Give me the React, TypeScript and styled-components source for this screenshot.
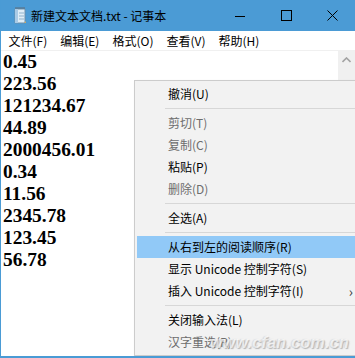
import * as React from "react"
import styled, { createGlobalStyle } from "styled-components"

const GlobalStyle = createGlobalStyle`
  html, body {
    margin: 0;
    padding: 0;
    background: #ffffff;
    overflow: hidden;
  }
`

const ui = `"Noto Sans CJK SC", "Noto Sans", sans-serif`

const numbers = [
  "0.45",
  "223.56",
  "121234.67",
  "44.89",
  "2000456.01",
  "0.34",
  "11.56",
  "2345.78",
  "123.45",
  "56.78",
]

type Entry =
  | { sep: true }
  | { label: string; disabled?: boolean; active?: boolean; sub?: boolean }

const menuEntries: Entry[] = [
  { label: "撤消(U)" },
  { sep: true },
  { label: "剪切(T)", disabled: true },
  { label: "复制(C)", disabled: true },
  { label: "粘贴(P)" },
  { label: "删除(D)", disabled: true },
  { sep: true },
  { label: "全选(A)" },
  { sep: true },
  { label: "从右到左的阅读顺序(R)", active: true },
  { label: "显示 Unicode 控制字符(S)" },
  { label: "插入 Unicode 控制字符(I)", sub: true },
  { sep: true },
  { label: "关闭输入法(L)" },
  { label: "汉字重选(R)", disabled: true },
]

const App = () => {
  return (
    <>
      <GlobalStyle />
      <Window>
        <TitleBar>
          <AppIcon />
          <Title>新建文本文档.txt - 记事本</Title>
          <Controls>
            <CtrlButton>
              <svg width="10" height="10" viewBox="0 0 10 10">
                <line x1="0" y1="5.5" x2="10" y2="5.5" stroke="#000" strokeWidth="1" />
              </svg>
            </CtrlButton>
            <CtrlButton>
              <svg width="11" height="11" viewBox="0 0 11 11">
                <rect x="0.5" y="0.5" width="10" height="10" fill="none" stroke="#000" strokeWidth="1" />
              </svg>
            </CtrlButton>
            <CtrlButton>
              <svg width="11" height="11" viewBox="0 0 11 11">
                <path d="M0.5 0.5 L10.5 10.5 M10.5 0.5 L0.5 10.5" stroke="#000" strokeWidth="1" />
              </svg>
            </CtrlButton>
          </Controls>
        </TitleBar>

        <MenuBar>
          <MenuItem>文件(F)</MenuItem>
          <MenuItem>编辑(E)</MenuItem>
          <MenuItem>格式(O)</MenuItem>
          <MenuItem>查看(V)</MenuItem>
          <MenuItem>帮助(H)</MenuItem>
        </MenuBar>

        <Body>
          <Editor>
            {numbers.map((n) => (
              <Line key={n}>{n}</Line>
            ))}
          </Editor>
          <ScrollBar>
            <ScrollArrow>
              <svg width="9" height="6" viewBox="0 0 9 6">
                <path d="M0.5 5 L4.5 1 L8.5 5" fill="none" stroke="#a3a3a3" strokeWidth="1.6" />
              </svg>
            </ScrollArrow>
          </ScrollBar>

          <ContextMenu>
            {menuEntries.map((e, i) =>
              "sep" in e ? (
                <Separator key={i} />
              ) : (
                <CtxItem key={i} $disabled={e.disabled} $active={e.active}>
                  {e.label}
                  {e.sub && <SubArrow>›</SubArrow>}
                </CtxItem>
              )
            )}
          </ContextMenu>

          <Watermark>www.cfan.com.cn</Watermark>
        </Body>
      </Window>
    </>
  )
}
export default App

const AppIcon = () => (
  <IconBox>
    <svg width="16" height="17" viewBox="0 0 16 17">
      <path d="M3 2 L13 2 L13 16 L3 16 Z" fill="#dfeef8" stroke="#6a8fab" strokeWidth="1" />
      <path d="M3 2 L6 2 L6 16 L3 16 Z" fill="#a9cbe6" />
      <line x1="7" y1="6" x2="12" y2="6" stroke="#8fb2cc" />
      <line x1="7" y1="9" x2="12" y2="9" stroke="#8fb2cc" />
      <line x1="7" y1="12" x2="12" y2="12" stroke="#8fb2cc" />
      <path d="M3.5 1 L12.5 1" stroke="#5d6b78" strokeWidth="2" strokeDasharray="1 1" />
      <path d="M12 16 L14 14 L14 16 Z" fill="#c9a96a" />
    </svg>
  </IconBox>
)

const Window = styled.div`
  width: 355px;
  height: 358px;
  box-sizing: border-box;
  border-left: 1px solid #4a9bd5;
  border-bottom: 2px solid #4a9bd5;
  display: flex;
  flex-direction: column;
  overflow: hidden;
  font-family: ${ui};
`

const TitleBar = styled.div`
  height: 31px;
  flex-shrink: 0;
  background: #4b9bd5;
  display: flex;
  align-items: center;
`

const IconBox = styled.div`
  width: 16px;
  height: 17px;
  margin-left: 11px;
  display: flex;
`

const Title = styled.div`
  margin-left: 3px;
  font-size: 12px;
  color: #000;
  flex: 1;
  white-space: nowrap;
`

const Controls = styled.div`
  display: flex;
  height: 100%;
`

const CtrlButton = styled.div`
  width: 46px;
  height: 100%;
  display: flex;
  align-items: center;
  justify-content: center;
`

const MenuBar = styled.div`
  height: 19px;
  flex-shrink: 0;
  background: #ffffff;
  border-bottom: 1px solid #f0f0f0;
  display: flex;
  align-items: center;
  padding-left: 1px;
`

const MenuItem = styled.div`
  padding: 0 6.5px;
  font-size: 12px;
  line-height: 19px;
  color: #000;
  white-space: nowrap;
`

const Body = styled.div`
  flex: 1;
  display: flex;
  position: relative;
  background: #ffffff;
`

const Editor = styled.div`
  flex: 1;
  padding: 0 0 0 2px;
  font-family: "Liberation Serif", "Times New Roman", serif;
  font-weight: bold;
  font-size: 19.4px;
  color: #000;
`

const Line = styled.div`
  height: 22px;
  line-height: 22px;
`

const ScrollBar = styled.div`
  width: 17px;
  background: #f0f0f0;
  flex-shrink: 0;
`

const ScrollArrow = styled.div`
  height: 17px;
  display: flex;
  align-items: center;
  justify-content: center;
`

const ContextMenu = styled.div`
  position: absolute;
  left: 133px;
  top: 29px;
  width: 226px;
  box-sizing: border-box;
  padding: 2px;
  background: #f2f2f2;
  border: 1px solid #cccccc;
  box-shadow: 2px 2px 3px rgba(0, 0, 0, 0.2);
`

const CtxItem = styled.div<{ $disabled?: boolean; $active?: boolean }>`
  position: relative;
  height: 22px;
  line-height: 22px;
  padding-left: 31px;
  font-size: 12px;
  white-space: nowrap;
  color: ${(p) => (p.$disabled ? "#6d6d6d" : "#000")};
  background: ${(p) => (p.$active ? "#91c9f7" : "transparent")};
`

const SubArrow = styled.span`
  position: absolute;
  right: 4px;
  top: 0;
  font-size: 14px;
  color: #333;
`

const Separator = styled.div`
  height: 7px;
  margin-left: 28px;
  display: flex;
  align-items: center;
  &::after {
    content: "";
    flex: 1;
    height: 1px;
    background: #d7d7d7;
  }
`

const Watermark = styled.div`
  position: absolute;
  right: 6px;
  bottom: 4px;
  font-family: "Liberation Sans", Arial, sans-serif;
  font-style: italic;
  font-weight: bold;
  font-size: 16px;
  letter-spacing: 0.3px;
  color: rgba(255, 255, 255, 0.7);
  text-shadow: 1px 1px 1px rgba(110, 110, 110, 0.45), -1px 0 1px rgba(160, 160, 160, 0.3);
  pointer-events: none;
`
